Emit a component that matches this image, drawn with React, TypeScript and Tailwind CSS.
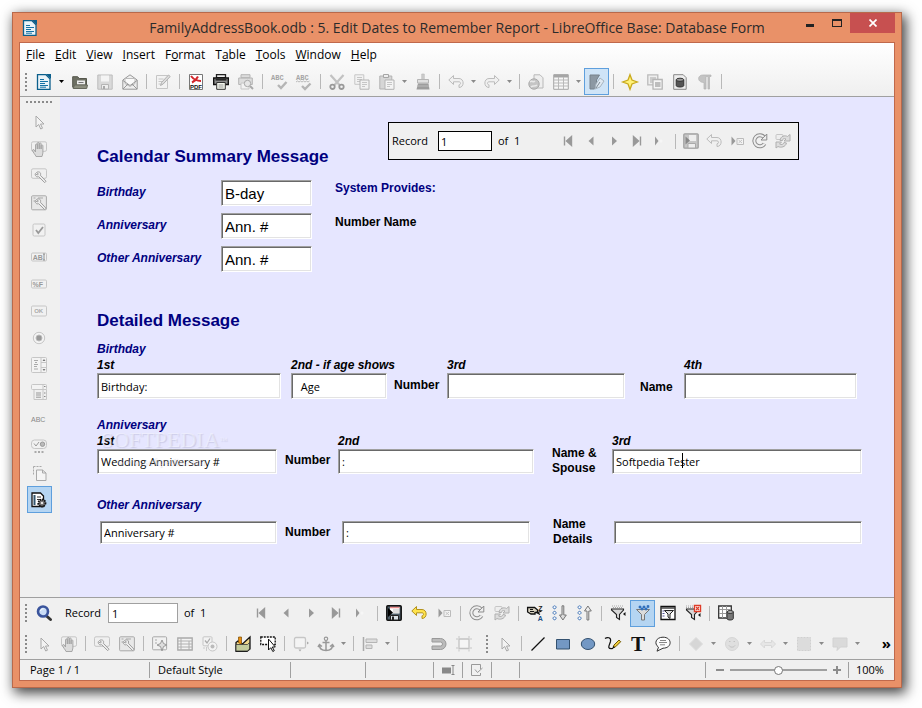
import clsx from "clsx";
import type { ReactNode } from "react";

const GRAY = "#a9a9a9";
const LIGHT = "#c6c6c6";

const wrench = (
	<path
		d="M5.500 4.500c1-1 3-.8 3.800.3.5.8.4 1.700 0 2.400l5.700 6-1.300 1.500-6-6c-1 .4-2.300.2-3-.8-.6-.8-.6-1.800-.3-2.400l1.700 1.500 1.300-1z"
		fill="#eee"
		stroke="#a0a0a0"
	/>
);

const hand = (
	<path
		d="M5 15.500c-.5-2-3-3.500-3.500-6.500l1.200-.6L4.500 11V3.800c0-1 1.800-1 1.800 0V8 2.200c0-1 1.900-1 1.900 0V8 2.700c0-1 1.900-1 1.900 0V8 4.700c0-1 1.800-1 1.800 0V12L11 15.500z"
		fill="#dcdcdc"
		stroke="#a0a0a0"
		strokeWidth=".9"
	/>
);

const funnel = (
	<path d="M1.500 4h12v1L9.500 9.500V14.500l-3-2v-3L1.500 5z" fill="#d8d8d8" stroke="#222" strokeWidth="1.100" />
);

const icons: Record<string, ReactNode> = {
	doc: (
		<>
			<path d="M1.500 .7h8.500l4 4V15.300H1.500z" fill="#eaf3f8" stroke="#0b5f8c" strokeWidth="1.300" />
			<path d="M10 0h5v5z" fill="#0b5f8c" />
			<path d="M4 5.500h4M4 7.500h8M4 9.500h5M4 11.500h8M4 13.200h6" stroke="#1672a5" />
		</>
	),
	open: (
		<>
			<path d="M.7 13.300V2.700h5l1.500 1.800h7.300v9z" fill="#6d6f63" stroke="#55574c" />
			<path d="M5 6.500h8v4H5z" fill="#eee" />
			<path d="M6.500 8.500h5" stroke="#777" />
			<path d="M2.500 11h13l-.8 3.500H1.200z" fill="#8d8f80" stroke="#66685c" />
		</>
	),
	save: (
		<>
			<path d="M.8 1h14.400v14.200H.8z" fill="#d9d9d9" stroke="#bdbdbd" />
			<path d="M4 1.500h8v6H4z" fill="#f4f4f4" />
			<path d="M4.500 10.500h7V15h-7z" fill="#eee" stroke="#b5b5b5" />
			<path d="M6 12h2v3H6z" fill={GRAY} />
		</>
	),
	mail: (
		<>
			<path d="M.8 6 8 .8 15.200 6v9.200H.8z" fill="#eee" stroke="#999" />
			<path d="M3 4.500h10v5l-5 3-5-3z" fill="#fafafa" stroke="#bbb" />
			<path d="M1 6.500 8 11.500l7-5M1 15l5-5m9 5-5-5" stroke="#999" />
		</>
	),
	edit: (
		<>
			<path d="M1.500 1.500h11v13h-11z" fill="#f3f3f3" stroke={LIGHT} />
			<path d="M3.500 5h5M3.500 7.500h4M3.500 10h2" stroke={LIGHT} />
			<path d="m5.500 11.500 1-3 7-7.500 1.700 1.500-7 7.500z" fill="#ddd" stroke="#b0b0b0" />
		</>
	),
	pdf: (
		<>
			<path d="M1.500 .5h13v15h-13z" fill="#fff" stroke="#777" />
			<path d="M3 2c3 4 6 5 10 5M10 2.500C9 4.500 7 7 4 8.500" stroke="#d3262b" strokeWidth="2" />
			<text x="2" y="15" fontSize="6" fontWeight="bold" fill="#111" fontFamily="Liberation Sans, sans-serif">PDF</text>
		</>
	),
	print: (
		<>
			<path d="M3.500 .7h9v3h-9z" fill="#eee" stroke="#222" strokeWidth="1.300" />
			<path d="M.7 4h14.600v6.500H.7z" fill="#8d8d8d" stroke="#111" strokeWidth="1.400" />
			<path d="M2.500 5.800h11" stroke="#222" strokeWidth="1.500" />
			<path d="M3.700 8.500h8.600v6.800H3.700z" fill="#f4f7ee" stroke="#333" />
			<path d="M5.500 11h5M5.500 13h5" stroke="#9a9a9a" />
		</>
	),
	preview: (
		<>
			<path d="M3 .7h9v3H3zM.7 4h13.600v6.500H.7z" fill="#ddd" stroke="#b5b5b5" />
			<path d="M3 9h8v6H3z" fill="#f2f2f2" stroke={LIGHT} />
			<circle cx="9.500" cy="9.500" r="3.200" fill="#e6e6e6" stroke={GRAY} />
			<path d="m12 12 3 3" stroke={GRAY} strokeWidth="2" />
		</>
	),
	spell: (
		<>
			<text x="0" y="5.500" fontSize="7" fontWeight="bold" fill="#a5a5a5" fontFamily="Liberation Mono, monospace">ABC</text>
			<path d="m7 11 3 3 5.500-6" stroke="#b5b5b5" strokeWidth="2.400" />
		</>
	),
	autospell: (
		<>
			<text x="0" y="5.500" fontSize="7" fontWeight="bold" fill="#a5a5a5" fontFamily="Liberation Mono, monospace">ABC</text>
			<path d="M0 8l1.500-1L3 8l1.500-1L6 8l1.500-1L9 8l1.500-1L12 8l1.500-1" stroke="#bbb" />
			<path d="m6 12 3 3 5.500-5.500" stroke="#b5b5b5" strokeWidth="2.400" />
		</>
	),
	cut: (
		<>
			<path d="m1.500 1 9 10M14.500 1 5.500 11" stroke="#c2c2c2" strokeWidth="2.200" />
			<circle cx="3.500" cy="12.800" r="2.200" stroke="#999" strokeWidth="1.800" />
			<circle cx="12.500" cy="12.800" r="2.200" stroke="#999" strokeWidth="1.800" />
		</>
	),
	copy: (
		<>
			<path d="M.8 .8h9v9.500h-9z" fill="#f2f2f2" stroke={LIGHT} />
			<path d="M3 3.500h5M3 5.500h5M3 7.500h3" stroke={LIGHT} />
			<path d="M6 6h9v9.200H6z" fill="#f2f2f2" stroke="#b4b4b4" />
			<path d="M8 8.500h5M8 10.500h5M8 12.500h3" stroke={LIGHT} />
		</>
	),
	paste: (
		<>
			<path d="M.8 2h12v13H.8z" fill="#d6d6d6" stroke="#b2b2b2" />
			<path d="M4.500 .5h5v3h-5z" fill="#eee" stroke="#a5a5a5" />
			<path d="M6 6h9v9.300H6z" fill="#f4f4f4" stroke="#b4b4b4" />
			<path d="M8 8.500h5M8 10.500h5M8 12.500h3" stroke={LIGHT} />
		</>
	),
	brush: (
		<>
			<path d="M6.700 0h2.600v5.500H6.700z" fill="#ccc" stroke="#bbb" strokeWidth=".6" />
			<path d="M2.500 5.500h11V9h-11z" fill="#e0e0e0" stroke="#b5b5b5" />
			<path d="M3 9.500h10.500l1 6H1.500z" fill="#9d9d9d" />
			<path d="M2 12h12" stroke="#bbb" />
		</>
	),
	undo: <path d="M5.500 1.500.8 6l4.700 4.500V7.800h5.500c2 0 2 3 0 3v2.700c5.500 0 5.500-9 0-9H5.500z" fill="#f0f0f0" stroke="#bcbcbc" />,
	redo: <path d="m10.500 1.500 4.700 4.500-4.700 4.500V7.800H5c-2 0-2 3 0 3v2.700c-5.500 0-5.500-9 0-9h5.500z" fill="#f0f0f0" stroke="#bcbcbc" />,
	link: (
		<>
			<path d="M6 .8h6l3 3V14H6z" fill="#eee" stroke="#b8b8b8" />
			<circle cx="6" cy="10" r="5.200" fill="#c4c4c4" stroke="#aaa" />
			<path d="M2 8c2-2 3 1 5-1M3 13c2-2 4 0 6-2" stroke="#e8e8e8" strokeWidth="1.500" />
		</>
	),
	table: (
		<>
			<path d="M.7 .7h14.600v14.600H.7z" fill="#f7f7f7" stroke="#a6a6a6" />
			<path d="M1 2h14" stroke="#a6a6a6" strokeWidth="3" />
			<path d="M5.500 3v12M10.500 3v12M1 6h14M1 9h14M1 12h14" stroke="#b9b9b9" />
		</>
	),
	navigate: (
		<>
			<path d="M1 1h9.500L7.500 6v4l-2 5H1z" fill="#8c98a3" stroke="#76828c" />
			<path d="M6 15l1-5 4-6 4 3-4 6z" fill="#dfe9f2" stroke="#a7b4bf" />
			<path d="m7 14 4-6" stroke="#7d8993" />
		</>
	),
	star: <path d="m8 .7 2 5.300 5.300 2L10 10l-2 5.300L6 10 .7 8 6 6z" fill="#fff27a" stroke="#c9a91c" strokeWidth="1.300" />,
	gallery: (
		<>
			<path d="M.8 .8h10v10h-10z" fill="#eee" stroke="#bbb" strokeWidth="1.300" />
			<path d="M3 3h6v6H3z" fill="#ccc" />
			<path d="M6 5.500h9.200v9.700H6z" fill="#f4f4f4" stroke="#b5b5b5" strokeWidth="1.300" />
			<path d="M8 8h5.500v5H8z" fill="#bdbdbd" />
		</>
	),
	source: (
		<>
			<path d="M1.700 .7h9.500l3 3v11.600H1.700z" fill="#eee" stroke="#888" />
			<path d="M4.200 6v5.500c0 2 7.600 2 7.600 0V6z" fill="#555" stroke="#333" />
			<ellipse cx="8" cy="5.800" rx="3.800" ry="1.600" fill="#999" stroke="#333" />
		</>
	),
	pilcrow: <path d="M14 1v1.500h-1.500V15H11V2.500H9V15H7V8.500C0 8.500 0 1 6 1z" fill="#c4c4c4" stroke="#b3b3b3" strokeWidth=".7" />,
	cursor: <path d="M5 2v11l2.700-2.500L9.700 15l1.800-.8-2-4.200H13z" fill="#f3f3f3" stroke={GRAY} />,
	hand: (
		<>
			<rect x=".5" y=".8" width="15" height="9.500" rx="1.500" stroke={LIGHT} />
			{hand}
		</>
	),
	wrench: (
		<>
			<rect x=".5" y=".8" width="15" height="9.500" rx="1.500" stroke={LIGHT} />
			{wrench}
		</>
	),
	wrenchBox: (
		<>
			<rect x=".6" y=".8" width="14.800" height="14" rx="1" fill="#e8e8e8" stroke={GRAY} />
			<path d="M2.500 3h2M2.500 6h2M7 3h5" stroke={GRAY} />
			{wrench}
		</>
	),
	check: (
		<>
			<rect x="2" y="2" width="12" height="12" rx="1.200" fill="#f1f1f1" stroke={LIGHT} />
			<path d="m5 8 2.300 3L12 5" stroke="#999" strokeWidth="1.800" />
		</>
	),
	textBox: (
		<>
			<rect x=".5" y="4" width="15" height="8" rx="1.200" fill="#f1f1f1" stroke={LIGHT} />
			<text x="1.800" y="10.500" fontSize="7" fontWeight="bold" fill="#999" fontFamily="Liberation Sans, sans-serif">AB</text>
			<path d="M13 5v6M12 5h2M12 11h2" stroke="#888" strokeWidth=".9" />
		</>
	),
	format: (
		<>
			<rect x=".5" y="4" width="15" height="8" rx="1.200" fill="#f1f1f1" stroke={LIGHT} />
			<text x="1.500" y="10.500" fontSize="7" fontWeight="bold" fill="#999" fontFamily="Liberation Sans, sans-serif">%F</text>
		</>
	),
	ok: (
		<>
			<rect x=".5" y="3" width="15" height="10" rx="1.200" fill="#f1f1f1" stroke={LIGHT} />
			<text x="3.200" y="10.300" fontSize="6" fontWeight="bold" fill="#aaa" fontFamily="Liberation Sans, sans-serif">OK</text>
		</>
	),
	radio: (
		<>
			<circle cx="8" cy="8" r="5.700" fill="#f4f4f4" stroke={LIGHT} />
			<circle cx="8" cy="8" r="3" fill="#999" stroke="#bbb" />
		</>
	),
	list: (
		<>
			<rect x=".5" y=".5" width="15" height="15" rx="1" fill="#f3f3f3" stroke={LIGHT} />
			<path d="M10 1v14M10 5.500h5M10 10.500h5" stroke={LIGHT} />
			<path d="M3 3.500h4M4 5.500h2M3 7.500h4M3 9.500h3M3 12h4" stroke="#aaa" />
			<path d="m11.500 4 1.500-2 1.500 2zM11.500 12l1.500 2 1.500-2z" fill="#777" />
		</>
	),
	combo: (
		<>
			<rect x=".5" y=".5" width="15" height="5" rx="1" fill="#f3f3f3" stroke={LIGHT} />
			<path d="M3 5.500h12.500v10H3zM12 1v14" stroke={LIGHT} />
			<path d="M5 9h5M5 11h5M5 13.200h5" stroke="#999" />
			<path d="M13 2.500h1.500M13 9h1.500M13 12.500h1.500" stroke="#888" />
		</>
	),
	abc: (
		<text x="0" y="10.500" fontSize="7" fill="#888" fontFamily="Liberation Sans, sans-serif">ABC</text>
	),
	more: (
		<>
			<rect x=".5" y="2" width="15" height="8.500" rx="3" fill="#f1f1f1" stroke={LIGHT} />
			<path d="m3 5.500 2 2.500 3-4" stroke="#999" />
			<circle cx="11.500" cy="6.200" r="2.200" fill="#bbb" stroke="#999" />
			<path d="M3.500 14h2M7 14h2M10.500 14h2" stroke="#aaa" strokeWidth="2" />
		</>
	),
	pages: (
		<>
			<path d="M2.500 1.500h8M2.500 1.500v9" stroke={GRAY} strokeDasharray="2 1" />
			<path d="M5.500 5h6l3.500 3v7.500H5.500z" fill="#f5f5f5" stroke={GRAY} />
			<path d="M11.500 5v3H15" stroke={GRAY} />
		</>
	),
	design: (
		<>
			<path d="M1 1h8.500l3 3v10.500H1z" fill="#fff" stroke="#111" strokeWidth="1.300" />
			<path d="M3.500 3v10" stroke="#33566f" strokeWidth="2" />
			<path d="M6 5h4M6 7.500h3M6 12h2" stroke="#333" />
			<circle cx="11" cy="11" r="3.500" fill="#777" stroke="#111" strokeDasharray="1.500 .8" strokeWidth="1.800" />
			<circle cx="11" cy="11" r="1.100" fill="#fff" />
		</>
	),
	first: <path d="M4.500 3.500V12.500M11.500 3.500 6.500 8l5 4.500z" fill="#999" stroke="#999" strokeWidth="1.400" />,
	prev: <path d="M10.500 3.500V12.500L5.500 8z" fill="#999" />,
	next: <path d="M6 3.500V12.500L11 8z" fill="#999" />,
	last: <path d="M11.500 3.500V12.500M4.500 3.500 9.500 8l-5 4.500z" fill="#999" stroke="#999" strokeWidth="1.400" />,
	fresh: (
		<>
			<path d="M3 3.500V12.500L6.500 8z" fill="#999" />
			<circle cx="9" cy="8" r="1.500" fill="#f6f6f6" />
		</>
	),
	saveGray: (
		<>
			<rect x=".8" y=".8" width="14.400" height="14.400" rx="1" fill="#c6c6c6" stroke="#a1a1a1" strokeWidth="1.300" />
			<path d="M6 2h7v6H6z" fill="#eee" />
			<path d="M5 10.500h7.500V15H5z" fill="#eee" stroke="#aaa" />
			<path d="M2.500 3.500v8L7 7.500z" fill="#888" />
		</>
	),
	saveRec: (
		<>
			<rect x=".8" y=".8" width="14.400" height="14.400" rx="1" fill="#4d5c67" stroke="#111" strokeWidth="1.500" />
			<path d="M4 2h9.500v6.500H4z" fill="#fff" />
			<path d="M4 2.500h9.500" stroke="#e88a8a" strokeWidth="1.500" />
			<path d="M7 5h6M7 7h6" stroke="#aaa" strokeWidth=".8" />
			<path d="M4.500 10.500h8V15h-8z" fill="#d9e1e6" stroke="#222" />
			<path d="M6 11.500h2V15H6z" fill="#222" />
			<path d="M2 3v9l5-4.500z" fill="#000" />
		</>
	),
	undoRec: <path d="M5.500 1.500.8 6l4.700 4.500V7.800h5.500c2 0 2 3 0 3v2.700c5.500 0 5.500-9 0-9H5.500z" fill="#ffe34d" stroke="#b3921d" />,
	delRec: (
		<>
			<path d="M2.500 3.500V12.500L6.500 8z" fill="#999" />
			<path d="M8 5.500h6.500v6H8z" fill="#f4f4f4" stroke="#bbb" />
			<path d="m9.500 7 3.500 3m0-3-3.500 3" stroke="#c4c4c4" />
		</>
	),
	refresh: (
		<>
			<path d="M12.500 10.700A5.500 5.500 0 1 1 12 4.200" stroke="#8c8c8c" strokeWidth="4" />
			<path d="M12.500 10.700A5.500 5.500 0 1 1 12 4.200" stroke="#eee" strokeWidth="2" />
			<path d="M14.800 1v6H9z" fill="#eee" stroke="#8c8c8c" />
		</>
	),
	refreshCtl: (
		<>
			<rect x="1" y="1.500" width="7" height="5" rx="1" fill="#eee" stroke={LIGHT} />
			<path d="M5 7.500C5.500 3 10 2 12.500 3.500L15 1.500V8H9l2-2c-2-1-3.500 0-3.500 1.500z" fill="#ddd" stroke="#b0b0b0" />
			<path d="M1 15V9h5.500l-2 2c2 1 4 .5 4.500-1.500l2.500.5c-1 4-5.500 5-8.500 3.500z" fill="#ddd" stroke="#b0b0b0" />
		</>
	),
	search: (
		<>
			<path d="m10 10.500 4.500 4" stroke="#333" strokeWidth="3" strokeLinecap="round" />
			<circle cx="7" cy="6.500" r="5" fill="#c9dcf6" stroke="#3a549c" strokeWidth="2.600" />
			<path d="M4.500 6c.4-1.500 1.500-2.200 3-2.200" stroke="#fff" />
		</>
	),
	sort: (
		<>
			<path d="M.6 2.500h7l3 2.500v2.500H8V9H4L.6 7z" fill="#d8d2c0" stroke="#111" strokeWidth="1.300" />
			<path d="M3 4.500h3M3 6.500h4" stroke="#111" />
			<text x="11.200" y="5.500" fontSize="7" fontWeight="bold" fill="#222" fontFamily="Liberation Sans, sans-serif">Z</text>
			<text x="10.800" y="16" fontSize="7" fontWeight="bold" fill="#1b4e86" fontFamily="Liberation Sans, sans-serif">A</text>
			<path d="m9 7 4 2.500M14.500 6 10 8" stroke="#111" strokeWidth="1.300" />
		</>
	),
	sortAsc: (
		<>
			<path d="M2.500 .8a1.500 1.500 0 1 0 .1 0M2.500 6.300a1.500 1.500 0 1 0 .1 0M2.500 11.800a1.500 1.500 0 1 0 .1 0" fill="#fff" stroke="#3b70b5" />
			<path d="M10 .8h1.800V10h2.500l-3.400 5L7.500 10H10z" fill="#ddd" stroke="#777" />
		</>
	),
	sortDesc: (
		<>
			<path d="M2.500 .8a1.500 1.500 0 1 0 .1 0M2.500 6.300a1.500 1.500 0 1 0 .1 0M2.500 11.800a1.500 1.500 0 1 0 .1 0" fill="#fff" stroke="#3b70b5" />
			<path d="M10 15h1.800V6h2.500l-3.400-5L7.500 6H10z" fill="#eee" stroke="#777" />
		</>
	),
	autoFilter: (
		<>
			<path d="M2 1h11M3 2.500h10" stroke="#aaa" strokeDasharray="1 1" />
			{funnel}
			<path d="M15.500 7v4L13 9z" fill="#111" />
		</>
	),
	applyFilter: (
		<>
			<path d="M1.500 4.500h13L9.500 9.500V15h-3V9.500z" fill="#dcdcdc" stroke="#777" />
			<path d="M4 1h2v2H4zM8 1h2v2H8zM12 .5h2v2h-2zM6 3h2v2H6zM10 3h2v2h-2z" fill="#2f6fbd" stroke="#2f6fbd" strokeWidth=".6" />
		</>
	),
	formFilter: (
		<>
			<path d="M1 1.500h14v13H1z" fill="#fff" stroke="#111" strokeWidth="1.300" />
			<path d="M1 3h14" stroke="#444" strokeWidth="1.500" />
			<path d="M2.500 6h2M2.500 8.500h2M2.500 11h2" stroke="#559" />
			<path d="M4.500 5.500h9L10 9v4.500L8 12V9z" fill="#ddd" stroke="#222" />
		</>
	),
	removeFilter: (
		<>
			<path d="M1 1h8M1 2.500h8" stroke="#aaa" strokeDasharray="1 1" />
			{funnel}
			<path d="M9.500 .5h6v6h-6z" fill="#fff" stroke="#de3c28" strokeWidth="1.400" />
			<path d="m11 2 3 3m0-3-3 3" stroke="#de3c28" strokeWidth="1.200" />
			<path d="M15.500 8v4L13 10z" fill="#111" />
		</>
	),
	dataTable: (
		<>
			<path d="M.7 1h12.600v12H.7z" fill="#fff" stroke="#333" strokeWidth="1.300" />
			<path d="M4.500 1v12M8.500 1v12M1 4.500h12M1 8.500h12" stroke="#999" />
			<path d="M9 7v6.500c0 2 6.300 2 6.300 0V7z" fill="#777" stroke="#333" />
			<ellipse cx="12.200" cy="7" rx="3.200" ry="1.500" fill="#aaa" stroke="#333" />
		</>
	),
	gearBox: (
		<>
			<rect x=".6" y=".8" width="14" height="13" rx="1" fill="#f1f1f1" stroke={GRAY} />
			<path d="M3 4h2M3 7h2" stroke={GRAY} />
			<path d="m10 4 1.500 3.500L15 9l-3.500 1.500L10 15l-1.500-4.500L5 9l3.500-1.500z" fill="#ddd" stroke="#999" />
		</>
	),
	formTable: (
		<>
			<path d="M.8 2h14.400v12H.8z" fill="#f3f3f3" stroke={GRAY} strokeWidth="1.300" />
			<path d="M1 5h14M1 8h14M1 11h14M4 2v12M12 5v9" stroke="#b0b0b0" />
		</>
	),
	checkRadio: (
		<>
			<rect x="1" y=".8" width="9" height="9" rx="1" fill="#f3f3f3" stroke={LIGHT} />
			<path d="m3 4.500 2 2.500 3-4.500" stroke="#aaa" strokeWidth="1.300" />
			<circle cx="10.500" cy="10.500" r="4.500" fill="#f3f3f3" stroke={LIGHT} />
			<circle cx="10.500" cy="10.500" r="2" fill="#bbb" />
			<path d="M2 11v2M4.500 11v4" stroke="#ccc" />
		</>
	),
	box: (
		<>
			<path d="M1 6.500 3 5l4.500 3L15 1v12l-3 2.300H1z" fill="#f1d98d" stroke="#111" strokeWidth="1.300" />
			<path d="M3.500 1h3v7.500l-3-2z" fill="#e98f10" stroke="#7a4a00" strokeWidth=".7" />
			<path d="M1 8.500h11.500l2-2V13l-2 2H1z" fill="#c4cc9d" stroke="#333" strokeWidth=".8" />
		</>
	),
	select: (
		<>
			<path d="M.8 1h14.400v7.500H.8z" fill="#fff" stroke="#111" strokeWidth="1.300" strokeDasharray="2 1" />
			<path d="M8.500 3v11l2.300-2.300 2 3.800 1.500-.8-2-3.700h3z" fill="#fff" stroke="#111" />
		</>
	),
	shape: (
		<>
			<rect x="1.500" y="1.500" width="11" height="10.500" rx="1.500" fill="#f4f4f4" stroke={LIGHT} strokeWidth="1.300" />
			<path d="M14 5.500v3l2-1.500zM5.500 13.500h3L7 15.500z" fill="#aaa" />
		</>
	),
	anchor: (
		<>
			<circle cx="8" cy="2.800" r="1.700" stroke="#999" strokeWidth="1.200" />
			<path d="M8 4.500V14M4.500 6.500h7M1.500 9c0 4 3 5.500 6.500 5.500S14.500 13 14.500 9M0 11l1.500-2.500L4 10.500M16 11l-1.500-2.500L12 10.500" stroke="#999" strokeWidth="1.500" />
		</>
	),
	align: (
		<>
			<path d="M1.500 1v14" stroke="#aaa" strokeWidth="1.500" />
			<path d="M4 3h11v3.500H4zM4 9h6v3.500H4z" fill="#ddd" stroke="#b5b5b5" />
		</>
	),
	blank: null,
	magnet: <path d="M1 2.500h8.500a5.500 5.500 0 0 1 0 11H1V10h8.500a2 2 0 0 0 0-4H1z" fill="#bbb" stroke="#999" />,
	frame: (
		<>
			<path d="M3 3h10v9.500H3z" fill="#f5f5f5" stroke="#c2c2c2" strokeWidth="1.300" />
			<path d="M3 0v2M13 0v2M3 13.500v2M13 13.500v2M0 3h2M14 3h2M0 12h2M14 12h2" stroke={LIGHT} />
		</>
	),
	line: <path d="M1.500 14.500 14.500 1.500" stroke="#111" strokeWidth="1.200" />,
	rect: <path d="M1.500 3.500h13v9.500h-13z" fill="#7398c4" stroke="#33516f" />,
	ellipse: <ellipse cx="8" cy="8" rx="6.700" ry="5.500" fill="#7398c4" stroke="#33516f" />,
	pencil: (
		<>
			<path d="M0 2.500C2 1 6.500 1 5.500 5.500 4.500 9 1 13.500 8 12.500" stroke="#111" strokeWidth="1.200" />
			<path d="m8 11.500 1-2.500 5-5 1.700 1.700-5 5z" fill="#f0cc3e" stroke="#6d5600" />
			<path d="m7 13 1.500-3 1.500 1.500z" fill="#111" />
		</>
	),
	text: <text x="1" y="15" fontSize="21" fontWeight="bold" fill="#111" fontFamily="Liberation Serif, serif">T</text>,
	callout: (
		<>
			<path d="M8 1.200c9.500 0 9.500 11 0 11l-6 3 1.500-4C-1.500 7.500 1 1.200 8 1.200z" fill="#fdfdfd" stroke="#333" />
			<path d="M5 4.500h6M4 6.500h8M5 8.800h5" stroke="#888" />
		</>
	),
	diamond: <path d="m8 1.500 6.500 6.500L8 14.500 1.500 8z" fill="#d6d6d6" stroke="#dcdcdc" />,
	smiley: (
		<>
			<circle cx="8" cy="8" r="6.500" fill="#dfdfdf" stroke="#d6d6d6" />
			<path d="M5 5.500h1.500M9.500 5.500H11M5 9.500c1.500 2.200 4.500 2.200 6 0" stroke="#c2c2c2" />
		</>
	),
	arrows: <path d="m.5 8 4-4v2.500h7V4l4 4-4 4V9.500h-7V12z" fill="#e6e6e6" stroke="#d8d8d8" />,
	flow: <path d="M1.500 1.500h13v13h-13z" fill="#dcdcdc" stroke="#d0d0d0" strokeDasharray="2 1" />,
	bubble: <path d="M1 2h14v9H8.500L5 14.500 5.500 11H1z" fill="#dadada" stroke="#d2d2d2" />,
};

function Icon({ name }: { name: string }) {
	return (
		<svg className="size-4 shrink-0 overflow-visible" viewBox="0 0 16 16" fill="none" aria-hidden="true">
			{icons[name]}
		</svg>
	);
}

interface ToolProps {
	name: string;
	active?: boolean;
	compact?: boolean;
}

function Tool({ name, active, compact }: ToolProps) {
	return (
		<button
			type="button"
			aria-label={name}
			className={clsx(
				"flex h-[27px] shrink-0 items-center justify-center",
				compact ? "w-[23px]" : "w-[25px]",
				active && "border border-[#5e9fdd]",
				active && (name === "navigate" ? "bg-[#cfe4f7]" : "bg-[#b5d5f2]"),
			)}
		>
			<Icon name={name} />
		</button>
	);
}

function Arrow({ dark }: { dark?: boolean }) {
	return (
		<button type="button" aria-label="More" className="flex h-[27px] w-[11px] shrink-0 items-center justify-center">
			<svg width="5" height="3" viewBox="0 0 5 3" aria-hidden="true">
				<path d="M0 0h5L2.500 3z" fill={dark ? "#000" : "#8a8a8a"} />
			</svg>
		</button>
	);
}

function Sep() {
	return (
		<span className="flex w-2 shrink-0 justify-center">
			<span className="h-[15px] w-px bg-[#b8b8b8]" />
		</span>
	);
}

function Grip() {
	return <span className="mr-1 h-[18px] w-0 shrink-0 border-l-2 border-dotted border-[#8a8a8a]" />;
}

// "|" is a separator, "v" a drop-down arrow, ":" a grip, "*" marks the pressed button
function Tools({ items, compact }: { items: string; compact?: boolean }) {
	return (
		<>
			{items.split(" ").map((item, i) => {
				if (item === "|") return <Sep key={i} />;
				if (item === "v") return <Arrow key={i} />;
				if (item === "V") return <Arrow key={i} dark />;
				if (item === ":") return <Grip key={i} />;
				return (
					<Tool key={i} name={item.replace("*", "")} active={item.startsWith("*")} compact={compact} />
				);
			})}
		</>
	);
}

interface FieldProps {
	id: string;
	label?: string;
	value?: string;
	className: string;
	inputClassName?: string;
	large?: boolean;
	children?: ReactNode;
}

function Field({ id, label, value = "", className, inputClassName = "h-[26px]", large, children }: FieldProps) {
	return (
		<div className={clsx("relative", className)}>
			{label && (
				<label htmlFor={id} className="block h-4 whitespace-nowrap font-bold italic leading-4">
					{label}
				</label>
			)}
			<input
				id={id}
				aria-label={label ? undefined : id}
				defaultValue={value}
				className={clsx(
					"block w-full border border-t-[#a0a0a0] border-r-white border-b-white border-l-[#a0a0a0] bg-white pl-[3px] font-normal text-black shadow-[inset_1px_1px_#696969,inset_-1px_-1px_#e3e3e3] outline-none",
					inputClassName,
					large
						? "font-['Liberation_Sans',Arial,sans-serif] text-[15px]"
						: "font-['Open_Sans','Noto_Sans',sans-serif] text-[11px]",
				)}
			/>
			{children}
		</div>
	);
}

const menus = ["File", "Edit", "View", "Insert", "Format", "Table", "Tools", "Window", "Help"];
const accel: Record<string, number> = { Format: 1, Table: 1 };

const summary = [
	{ label: "Birthday", value: "B-day" },
	{ label: "Anniversary", value: "Ann. #" },
	{ label: "Other Anniversary", value: "Ann. #" },
];

const sideTools =
	"cursor hand wrench wrenchBox check textBox format ok radio list combo abc more pages *design";

function TitleBar() {
	return (
		<header className="grid h-[29px] grid-cols-[1fr_auto_1fr] text-[#2b2b2b]">
			<div className="flex items-center pl-[9px]">
				<Icon name="doc" />
			</div>
			<h1 className="flex items-center text-[14px]">
				FamilyAddressBook.odb : 5. Edit Dates to Remember Report - LibreOffice Base: Database Form
			</h1>
			<div className="flex h-5 justify-end pr-1.5">
				<button type="button" aria-label="Minimize" className="flex w-[27px] items-center justify-center pt-1">
					<span className="h-[3px] w-2 bg-[#222]" />
				</button>
				<button type="button" aria-label="Maximize" className="flex w-[27px] items-center justify-center">
					<span className="h-2 w-[10px] border border-t-2 border-[#222]" />
				</button>
				<button type="button" aria-label="Close" className="flex w-[45px] items-center justify-center bg-[#c75050]">
					<svg width="8" height="8" viewBox="0 0 8 8" aria-hidden="true">
						<path d="m.5.5 7 7m0-7-7 7" stroke="#fff" strokeWidth="1.700" />
					</svg>
				</button>
			</div>
		</header>
	);
}

function RecordPanel() {
	return (
		<div className="flex h-[38px] w-[411px] shrink-0 items-center border border-black bg-[#f0f0f0] pl-[3px] font-['Open_Sans','Noto_Sans',sans-serif] text-[11px] text-black">
			<label htmlFor="form-record" className="w-[46px]">
				Record
			</label>
			<input id="form-record" defaultValue="1" className="h-5 w-[54px] border border-black bg-white pl-0.5 outline-none" />
			<span className="w-[64px] whitespace-pre pl-1.5">of  1</span>
			<Tools compact items="first prev next last fresh | saveGray undo delRec refresh refreshCtl" />
		</div>
	);
}

function AddressForm() {
	return (
		<main className="min-w-0 flex-1 bg-[#e6e6ff] pt-[25px] pr-8 pl-[37px] font-['Liberation_Sans',Arial,sans-serif] text-[12px]">
			<div className="flex text-[#000080]">
				<h2 className="w-[291px] shrink-0 pt-[25px] text-[17px] font-bold leading-5">Calendar Summary Message</h2>
				<RecordPanel />
			</div>

			<div className="mt-[13px] flex">
				<div className="flex w-[238px] shrink-0 flex-col gap-[7px]">
					{summary.map(({ label, value }) => (
						<div key={label} className="flex items-center">
							<label htmlFor={`summary ${label}`} className="w-[124px] pb-0.5 font-bold italic text-[#000080]">
								{label}
							</label>
							<Field id={`summary ${label}`} value={value} large className="w-[91px]" />
						</div>
					))}
				</div>
				<div className="-mt-0.5 flex flex-col gap-3.5 font-bold leading-5">
					<p className="text-[#000080]">System Provides:</p>
					<p>Number Name</p>
				</div>
			</div>

			<h2 className="mt-[39px] text-[17px] font-bold leading-5 text-[#000080]">Detailed Message</h2>

			<h3 className="mt-2.5 font-bold italic leading-4 text-[#000080]">Birthday</h3>
			<div className="flex items-end font-bold">
				<Field id="birthday-1" label="1st" value="Birthday:" className="w-[184px]" />
				<Field id="birthday-2" label="2nd - if age shows" value="  Age" className="ml-2.5 w-[96px]" />
				<span className="w-[60px] pb-1 pl-[7px] leading-5">Number</span>
				<Field id="birthday-3" label="3rd" className="w-[178px]" />
				<span className="w-[59px] pb-0.5 pl-[15px] leading-5">Name</span>
				<Field id="birthday-4" label="4th" className="mr-[5px] flex-1" />
			</div>

			<h3 className="mt-[18px] font-bold italic leading-4 text-[#000080]">Anniversary</h3>
			<div className="relative flex items-end font-bold">
				<Field id="anniversary-1" label="1st" value="Wedding Anniversary #" inputClassName="h-[25px]" className="w-[180px]" />
				<span className="w-[61px] pb-1 pl-2 leading-5">Number</span>
				<Field id="anniversary-2" label="2nd" value=":" inputClassName="h-[25px]" className="w-[196px]" />
				<span className="-mb-0.5 w-[78px] pl-[18px] leading-[15px]">Name &amp; Spouse</span>
				<Field id="anniversary-3" label="3rd" value="Softpedia Tester" inputClassName="h-[25px]" className="flex-1">
					<span className="absolute bottom-1.5 left-[70px] h-[15px] w-px bg-black" />
				</Field>
				<div className="pointer-events-none absolute -top-2 left-1 font-['Liberation_Serif',serif] font-normal text-white/40 [text-shadow:1px_1px_1px_#8888aa44]">
					<p className="text-[22px] leading-[30px]">
						SOFTPEDIA<sup className="text-[8px]">™</sup>
					</p>
					<p className="pl-4 text-[11px] leading-3">www.softpedia.com</p>
				</div>
			</div>

			<h3 className="mt-[23px] font-bold italic leading-4 text-[#000080]">Other Anniversary</h3>
			<div className="mt-1 flex items-center pl-[3px] font-bold">
				<Field id="other-1" value="Anniversary #" inputClassName="h-[23px]" className="w-[177px]" />
				<span className="w-[65px] pl-2">Number</span>
				<Field id="other-2" value=":" inputClassName="h-[23px]" className="w-[188px]" />
				<span className="w-[84px] pl-[23px] leading-[15px]">Name Details</span>
				<Field id="other-3" inputClassName="h-[23px]" className="flex-1" />
			</div>
		</main>
	);
}

function StatusBar() {
	return (
		<footer className="flex h-5 items-center text-[11px] [&>*]:h-4 [&>*]:leading-4">
			<span className="w-[130px] shrink-0 border-r border-[#a0a0a0] pl-2.5">Page 1 / 1</span>
			<span className="w-[141px] shrink-0 border-r border-[#a0a0a0] pl-2">Default Style</span>
			<span className="w-[75px] shrink-0 border-r border-[#a0a0a0]" />
			<span className="w-[68px] shrink-0 border-r border-[#a0a0a0]" />
			<span className="flex w-[29px] shrink-0 items-center justify-center border-r border-[#a0a0a0]">
				<svg width="13" height="10" viewBox="0 0 13 10" aria-hidden="true">
					<path d="M0 2.500h9v6H0z" fill="#888" />
					<path d="M9.500 .5h3M11 .5v9M9.500 9.500h3" stroke="#888" />
				</svg>
			</span>
			<span className="flex w-[29px] shrink-0 items-center justify-center border-r border-[#a0a0a0]">
				<svg width="12" height="12" viewBox="0 0 12 12" fill="none" aria-hidden="true">
					<path d="M9.500 5V.5h-9v11h9V9M4 5.500l2.500 3L11.500 4" stroke="#999" />
				</svg>
			</span>
			<span className="w-[28px] shrink-0 border-r border-[#a0a0a0]" />
			<span className="flex-1 border-r border-[#a0a0a0]" />
			<div className="flex w-[143px] items-center justify-between border-r border-[#a0a0a0] pr-[7px] pl-2.5">
				<button type="button" aria-label="Zoom out" className="h-0.5 w-2 bg-[#8c8c8c]" />
				<input
					type="range"
					aria-label="Zoom"
					className="h-0.5 w-[97px] appearance-none bg-[#a0a0a0] [&::-webkit-slider-thumb]:size-[9px] [&::-webkit-slider-thumb]:appearance-none [&::-webkit-slider-thumb]:rounded-full [&::-webkit-slider-thumb]:border [&::-webkit-slider-thumb]:border-[#777] [&::-webkit-slider-thumb]:bg-white"
				/>
				<button type="button" aria-label="Zoom in">
					<svg width="8" height="8" viewBox="0 0 8 8" aria-hidden="true">
						<path d="M4 0v8M0 4h8" stroke="#8c8c8c" strokeWidth="2" />
					</svg>
				</button>
			</div>
			<span className="w-[45px] shrink-0 pl-[7px]">100%</span>
		</footer>
	);
}

export default function App() {
	return (
		<div className="flex min-h-screen bg-white pt-3 pr-5 pb-5 pl-3 font-['Open_Sans','Noto_Sans',sans-serif] text-black">
			<div className="flex min-w-0 flex-1 flex-col border border-[#b8694b] bg-[#e99168] shadow-[3px_4px_12px_1px_rgba(0,0,0,0.75)]">
				<TitleBar />
				<div className="mx-1.5 mb-1.5 flex flex-1 flex-col overflow-hidden border border-[#c0694c] bg-[#f0f0f0]">
					<div className="border-b border-[#a0a0a0] bg-linear-to-b from-white to-[#efefef]">
						<nav className="flex h-6 items-center gap-2.5 pl-1.5 text-[12px]">
							{menus.map((menu) => {
								const at = accel[menu] ?? 0;
								return (
									<button type="button" key={menu}>
										{menu.slice(0, at)}
										<u>{menu[at]}</u>
										{menu.slice(at + 1)}
									</button>
								);
							})}
						</nav>
						<div className="flex h-[29px] items-center pl-[5px]">
							<Tools items=": doc V open save mail | edit | pdf print preview | spell autospell | cut copy paste v brush | undo v redo v | link table v *navigate | star gallery source pilcrow |" />
						</div>
					</div>

					<div className="flex flex-1">
						<aside className="flex w-10 shrink-0 flex-col items-center pt-1 pr-0.5">
							<span className="mb-[5px] w-[26px] border-t-2 border-dotted border-[#8a8a8a]" />
							<Tools items={sideTools} />
						</aside>
						<AddressForm />
					</div>

					<div className="border-y border-[#a0a0a0]">
						<div className="flex h-[30px] items-center pl-[5px] text-[11px]">
							<Grip />
							<Tool name="search" />
							<label htmlFor="nav-record" className="w-[52px] pl-[9px]">
								Record
							</label>
							<input id="nav-record" defaultValue="1" className="h-5 w-[70px] border border-[#a0a0a0] bg-white pl-[3px] outline-none" />
							<span className="w-[70px] whitespace-pre pl-1.5">of  1</span>
							<Tools items="first prev next last fresh | saveRec undoRec delRec | refresh refreshCtl | sort sortAsc sortDesc | autoFilter *applyFilter formFilter removeFilter | dataTable" />
						</div>
						<div className="flex h-[31px] items-center pl-[5px]">
							<Tools items=": cursor hand | wrench wrenchBox | gearBox formTable checkRadio | box select | shape anchor v | align v | blank magnet frame" />
							<span className="w-2.5" />
							<Tools items=": cursor | line rect ellipse pencil text callout | diamond v smiley v arrows v flow v bubble v" />
							<button type="button" className="ml-auto pr-[3px] pb-0.5 text-[15px] font-bold leading-5">
								»
							</button>
						</div>
					</div>
					<StatusBar />
				</div>
			</div>
		</div>
	);
}
